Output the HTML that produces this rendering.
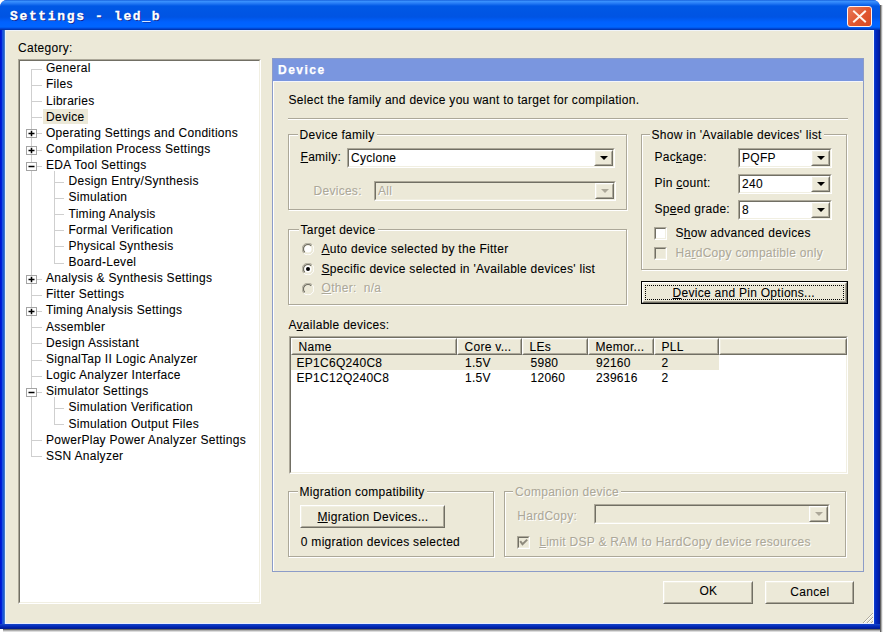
<!DOCTYPE html><html><head><meta charset="utf-8"><style>
*{margin:0;padding:0;box-sizing:border-box}
html,body{width:883px;height:632px;overflow:hidden;background:#fff;position:relative}
body{font-family:"Liberation Sans",sans-serif}
.a{position:absolute}
.t{position:absolute;font:12px/13px "Liberation Sans",sans-serif;letter-spacing:.28px;-webkit-text-stroke-width:.08px;white-space:nowrap;color:#000}
.d{color:#ACA899;text-shadow:1px 1px 0 #fff}
u{text-decoration:underline;text-underline-offset:1px}
.sunk{position:absolute;border-top:1px solid #ACA899;border-left:1px solid #ACA899;border-bottom:1px solid #fff;border-right:1px solid #fff}
.sunk>.in{position:absolute;left:0;top:0;right:0;bottom:0;border-top:1px solid #716F64;border-left:1px solid #716F64;border-bottom:1px solid #F1EFE2;border-right:1px solid #F1EFE2}
.btn{position:absolute;background:#ECE9D8;border-top:1px solid #fff;border-left:1px solid #fff;border-bottom:1px solid #716F64;border-right:1px solid #716F64}
.btn>.in{position:absolute;left:0;top:0;right:0;bottom:0;border-top:1px solid #F1EFE2;border-left:1px solid #F1EFE2;border-bottom:1px solid #ACA899;border-right:1px solid #ACA899}
.grp{position:absolute;border:1px solid #ACA899;box-shadow:inset 1px 1px 0 #fff,1px 1px 0 #fff}
.gl{background:#ECE9D8;padding:0 2px}
.hl{position:absolute;height:1px;border-top:1px solid #CFCFCF}
.vl{position:absolute;width:1px;border-left:1px solid #CFCFCF}
</style></head><body>
<div class="a" style="left:0;top:0;width:880px;height:629px;background:#0A3FD8;border-radius:7px 7px 0 0"></div>
<div class="a" style="left:0;top:0;width:880px;height:30px;border-radius:7px 7px 0 0;background:linear-gradient(#0A4FD0 0px,#3D95FF 1px,#2A7FF7 3px,#0058E5 6px,#0054E3 17px,#0061FF 22px,#0066FF 27px,#0048D8 28.5px,#0030A0 30px)"></div>
<div class="a" style="left:0;top:30px;width:5px;height:599px;background:linear-gradient(90deg,#0010D0,#0020D8 1.5px,#1850E0 2.5px,#2060C8 4px,#6090D0)"></div>
<div class="a" style="left:874px;top:30px;width:6px;height:599px;background:linear-gradient(90deg,#1040D0,#0028C0 2px,#0020B0 4px,#001890)"></div>
<div class="a" style="left:0;top:624px;width:880px;height:5px;background:linear-gradient(#1848C8,#0A34C0 1.5px,#0024B0 3px,#001A88)"></div>
<div class="a" style="left:880px;top:5px;width:3px;height:627px;background:linear-gradient(90deg,#404040,#808080 1px,#D8D8D8 2px,#fff)"></div>
<div class="a" style="left:3px;top:629px;width:877px;height:3px;background:linear-gradient(#404040,#909090 1px,#D0D0D0 2px,#E8E8E8)"></div>
<div class="a" style="left:5px;top:30px;width:869px;height:594px;background:#ECE9D8;border-top:1px solid #F0F4FA;border-left:1px solid #E8F4FF;border-right:1px solid #F4F8FF;border-bottom:1px solid #E8ECFF"></div>
<svg class="a" style="left:860px;top:610px" width="14" height="14"><path d="M13 3L3 13M13 7L7 13M13 11L11 13" stroke="#ACA899" stroke-width="1"/><path d="M13 4L4 13M13 8L8 13" stroke="#fff" stroke-width="1"/></svg>
<div class="a" style="left:10px;top:7px;font:bold 13px/20px 'Liberation Mono',monospace;color:#fff;letter-spacing:1.65px;-webkit-text-stroke:.3px #fff;text-shadow:1px 1px 0 #0A1E8A">Settings - led_b</div>
<div class="a" style="left:847px;top:6px;width:25px;height:21px;border:1px solid #FFF0F0;border-radius:3px;background:linear-gradient(135deg,#E87A5A,#E0552E 55%,#D84A22)"></div>
<svg class="a" style="left:847px;top:6px" width="25" height="21" viewBox="0 0 25 21"><path d="M7 5.5L18 15.5M18 5.5L7 15.5" stroke="#FFF4EC" stroke-width="2" stroke-linecap="square"/></svg>
<div class="t " style="left:18px;top:42.00px;">Category:</div>
<div class="sunk" style="left:18px;top:59px;width:243px;height:545px;background:#fff;"><div class="in"></div></div>
<div class="vl" style="left:31px;top:69px;height:388px"></div>
<div class="a" style="left:43px;top:109px;width:45px;height:15px;background:#ECE9D8"></div>
<div class="hl" style="left:32px;top:69px;width:10px"></div>
<div class="t " style="left:46px;top:62.20px;">General</div>
<div class="hl" style="left:32px;top:85px;width:10px"></div>
<div class="t " style="left:46px;top:78.35px;">Files</div>
<div class="hl" style="left:32px;top:101px;width:10px"></div>
<div class="t " style="left:46px;top:94.50px;">Libraries</div>
<div class="hl" style="left:32px;top:117px;width:10px"></div>
<div class="t " style="left:46px;top:110.65px;">Device</div>
<div class="hl" style="left:32px;top:133px;width:10px"></div>
<svg class="a" style="left:26px;top:129px" width="11" height="9"><rect x="0.5" y="0.5" width="10" height="8" fill="#fff" stroke="#A4A4A4"/><path d="M2.5 4.5H8.5M5.5 1.8V7.2" stroke="#000" stroke-width="1.5"/></svg>
<div class="t " style="left:46px;top:126.80px;">Operating Settings and Conditions</div>
<div class="hl" style="left:32px;top:150px;width:10px"></div>
<svg class="a" style="left:26px;top:146px" width="11" height="9"><rect x="0.5" y="0.5" width="10" height="8" fill="#fff" stroke="#A4A4A4"/><path d="M2.5 4.5H8.5M5.5 1.8V7.2" stroke="#000" stroke-width="1.5"/></svg>
<div class="t " style="left:46px;top:142.95px;">Compilation Process Settings</div>
<div class="hl" style="left:32px;top:166px;width:10px"></div>
<svg class="a" style="left:26px;top:162px" width="11" height="9"><rect x="0.5" y="0.5" width="10" height="8" fill="#fff" stroke="#A4A4A4"/><path d="M2.5 4.5H8.5" stroke="#000" stroke-width="1.5"/></svg>
<div class="t " style="left:46px;top:159.10px;">EDA Tool Settings</div>
<div class="hl" style="left:55px;top:182px;width:9px"></div>
<div class="t " style="left:68.5px;top:175.25px;">Design Entry/Synthesis</div>
<div class="hl" style="left:55px;top:198px;width:9px"></div>
<div class="t " style="left:68.5px;top:191.40px;">Simulation</div>
<div class="hl" style="left:55px;top:214px;width:9px"></div>
<div class="t " style="left:68.5px;top:207.55px;">Timing Analysis</div>
<div class="hl" style="left:55px;top:230px;width:9px"></div>
<div class="t " style="left:68.5px;top:223.70px;">Formal Verification</div>
<div class="hl" style="left:55px;top:246px;width:9px"></div>
<div class="t " style="left:68.5px;top:239.85px;">Physical Synthesis</div>
<div class="hl" style="left:55px;top:263px;width:9px"></div>
<div class="t " style="left:68.5px;top:256.00px;">Board-Level</div>
<div class="hl" style="left:32px;top:279px;width:10px"></div>
<svg class="a" style="left:26px;top:275px" width="11" height="9"><rect x="0.5" y="0.5" width="10" height="8" fill="#fff" stroke="#A4A4A4"/><path d="M2.5 4.5H8.5M5.5 1.8V7.2" stroke="#000" stroke-width="1.5"/></svg>
<div class="t " style="left:46px;top:272.15px;">Analysis &amp; Synthesis Settings</div>
<div class="hl" style="left:32px;top:295px;width:10px"></div>
<div class="t " style="left:46px;top:288.30px;">Fitter Settings</div>
<div class="hl" style="left:32px;top:311px;width:10px"></div>
<svg class="a" style="left:26px;top:307px" width="11" height="9"><rect x="0.5" y="0.5" width="10" height="8" fill="#fff" stroke="#A4A4A4"/><path d="M2.5 4.5H8.5M5.5 1.8V7.2" stroke="#000" stroke-width="1.5"/></svg>
<div class="t " style="left:46px;top:304.45px;">Timing Analysis Settings</div>
<div class="hl" style="left:32px;top:327px;width:10px"></div>
<div class="t " style="left:46px;top:320.60px;">Assembler</div>
<div class="hl" style="left:32px;top:343px;width:10px"></div>
<div class="t " style="left:46px;top:336.75px;">Design Assistant</div>
<div class="hl" style="left:32px;top:360px;width:10px"></div>
<div class="t " style="left:46px;top:352.90px;">SignalTap II Logic Analyzer</div>
<div class="hl" style="left:32px;top:376px;width:10px"></div>
<div class="t " style="left:46px;top:369.05px;">Logic Analyzer Interface</div>
<div class="hl" style="left:32px;top:392px;width:10px"></div>
<svg class="a" style="left:26px;top:388px" width="11" height="9"><rect x="0.5" y="0.5" width="10" height="8" fill="#fff" stroke="#A4A4A4"/><path d="M2.5 4.5H8.5" stroke="#000" stroke-width="1.5"/></svg>
<div class="t " style="left:46px;top:385.20px;">Simulator Settings</div>
<div class="hl" style="left:55px;top:408px;width:9px"></div>
<div class="t " style="left:68.5px;top:401.35px;">Simulation Verification</div>
<div class="hl" style="left:55px;top:424px;width:9px"></div>
<div class="t " style="left:68.5px;top:417.50px;">Simulation Output Files</div>
<div class="hl" style="left:32px;top:440px;width:10px"></div>
<div class="t " style="left:46px;top:433.65px;">PowerPlay Power Analyzer Settings</div>
<div class="hl" style="left:32px;top:456px;width:10px"></div>
<div class="t " style="left:46px;top:449.80px;">SSN Analyzer</div>
<div class="vl" style="left:54px;top:171px;height:93px"></div>
<div class="vl" style="left:54px;top:397px;height:28px"></div>
<div class="a" style="left:272px;top:58px;width:592px;height:514px;border:1px solid #8C9CC8;box-shadow:inset 1px 1px 0 #fff"></div>
<div class="a" style="left:273px;top:59px;width:590px;height:23px;background:#7A96DF;border-bottom:1px solid #F4F6FC"></div>
<div class="t " style="left:278px;top:64.20px;font-weight:bold;color:#fff;letter-spacing:1.5px;-webkit-text-stroke:.25px #fff">Device</div>
<div class="t " style="left:288.5px;top:93.50px;">Select the family and device you want to target for compilation.</div>
<div class="a" style="left:288px;top:118px;width:560px;height:2px;border-top:1px solid #ACA899;border-bottom:1px solid #fff"></div>
<div class="grp" style="left:288px;top:134px;width:339px;height:76px"></div>
<div class="t " style="left:297.5px;top:129.00px;"><span class="gl">Device family</span></div>
<div class="t " style="left:300.5px;top:150.80px;"><u>F</u>amily:</div>
<div class="sunk" style="left:347px;top:148px;width:268px;height:20px;background:#fff;"><div class="in"></div></div>
<div class="btn" style="left:594px;top:150px;width:19px;height:16px;"><div class="in"></div></div>
<svg class="a" style="left:600px;top:156px" width="8" height="4"><path d="M0 0H8L4 4Z" fill="#000"/></svg>
<div class="t " style="left:351px;top:152.00px;">Cyclone</div>
<div class="t d" style="left:313.5px;top:184.50px;">Devices:</div>
<div class="sunk" style="left:374px;top:181px;width:242px;height:20px;background:#ECE9D8;"><div class="in"></div></div>
<div class="btn" style="left:595px;top:183px;width:19px;height:16px;"><div class="in"></div></div>
<svg class="a" style="left:601px;top:189px" width="8" height="4"><path d="M0 0H8L4 4Z" fill="#ACA899"/></svg>
<div class="t d" style="left:378px;top:185.00px;">All</div>
<div class="grp" style="left:288px;top:229px;width:339px;height:76px"></div>
<div class="t " style="left:298.5px;top:223.70px;"><span class="gl">Target device</span></div>
<svg class="a" style="left:301.5px;top:243px" width="12" height="12" viewBox="0 0 12 12"><path d="M10.2 1.8A5.8 5.8 0 1 0 1.8 10.2" fill="none" stroke="#ACA899" stroke-width="1"/><path d="M9.2 2.8A4.5 4.5 0 1 0 2.8 9.2" fill="none" stroke="#716F64" stroke-width="1.3"/><path d="M1.8 10.2A5.8 5.8 0 1 0 10.2 1.8" fill="none" stroke="#fff" stroke-width="1"/><circle cx="6" cy="6" r="3.6" fill="#fff"/></svg>
<div class="t " style="left:321.5px;top:242.80px;"><u>A</u>uto device selected by the Fitter</div>
<svg class="a" style="left:301.5px;top:263px" width="12" height="12" viewBox="0 0 12 12"><path d="M10.2 1.8A5.8 5.8 0 1 0 1.8 10.2" fill="none" stroke="#ACA899" stroke-width="1"/><path d="M9.2 2.8A4.5 4.5 0 1 0 2.8 9.2" fill="none" stroke="#716F64" stroke-width="1.3"/><path d="M1.8 10.2A5.8 5.8 0 1 0 10.2 1.8" fill="none" stroke="#fff" stroke-width="1"/><circle cx="6" cy="6" r="3.6" fill="#fff"/><circle cx="6" cy="6" r="2" fill="#000"/></svg>
<div class="t " style="left:321.5px;top:262.80px;"><u>S</u>pecific device selected in 'Available devices' list</div>
<svg class="a" style="left:301.5px;top:282.5px" width="12" height="12" viewBox="0 0 12 12"><path d="M10.2 1.8A5.8 5.8 0 1 0 1.8 10.2" fill="none" stroke="#ACA899" stroke-width="1"/><path d="M9.2 2.8A4.5 4.5 0 1 0 2.8 9.2" fill="none" stroke="#716F64" stroke-width="1.3"/><path d="M1.8 10.2A5.8 5.8 0 1 0 10.2 1.8" fill="none" stroke="#fff" stroke-width="1"/><circle cx="6" cy="6" r="3.6" fill="#ECE9D8"/></svg>
<div class="t d" style="left:321.5px;top:282.30px;"><u>O</u>ther:&nbsp; n/a</div>
<div class="grp" style="left:641px;top:134px;width:206px;height:136px"></div>
<div class="t " style="left:649.5px;top:129.00px;"><span class="gl">Show in 'Available devices' list</span></div>
<div class="t " style="left:654.5px;top:151.00px;">Pac<u>k</u>age:</div>
<div class="sunk" style="left:738px;top:148px;width:94px;height:20px;background:#fff;"><div class="in"></div></div>
<div class="btn" style="left:811px;top:150px;width:19px;height:16px;"><div class="in"></div></div>
<svg class="a" style="left:817px;top:156px" width="8" height="4"><path d="M0 0H8L4 4Z" fill="#000"/></svg>
<div class="t " style="left:742px;top:152.00px;">PQFP</div>
<div class="t " style="left:654.5px;top:177.30px;">Pin <u>c</u>ount:</div>
<div class="sunk" style="left:738px;top:174px;width:94px;height:20px;background:#fff;"><div class="in"></div></div>
<div class="btn" style="left:811px;top:176px;width:19px;height:16px;"><div class="in"></div></div>
<svg class="a" style="left:817px;top:182px" width="8" height="4"><path d="M0 0H8L4 4Z" fill="#000"/></svg>
<div class="t " style="left:742px;top:178.00px;">240</div>
<div class="t " style="left:654.5px;top:203.40px;">Sp<u>e</u>ed grade:</div>
<div class="sunk" style="left:738px;top:200px;width:94px;height:20px;background:#fff;"><div class="in"></div></div>
<div class="btn" style="left:811px;top:202px;width:19px;height:16px;"><div class="in"></div></div>
<svg class="a" style="left:817px;top:208px" width="8" height="4"><path d="M0 0H8L4 4Z" fill="#000"/></svg>
<div class="t " style="left:742px;top:204.00px;">8</div>
<div class="sunk" style="left:654px;top:227px;width:13px;height:13px;background:#fff;"><div class="in"></div></div>
<div class="t " style="left:675.5px;top:226.60px;">S<u>h</u>ow advanced devices</div>
<div class="sunk" style="left:654px;top:247px;width:13px;height:13px;background:#ECE9D8;"><div class="in"></div></div>
<div class="t d" style="left:675.5px;top:246.60px;">Ha<u>r</u>dCopy compatible only</div>
<div class="a" style="left:641px;top:281px;width:207px;height:23px;border:1px solid #000"></div>
<div class="btn" style="left:642px;top:282px;width:205px;height:21px;"><div class="in"></div></div>
<div class="a" style="left:645px;top:285px;width:199px;height:15px;border:1px dotted #000"></div>
<div class="t " style="left:672.5px;top:286.50px;"><u>D</u>evice and Pin Options...</div>
<div class="t " style="left:288.5px;top:318.50px;">A<u>v</u>ailable devices:</div>
<div class="sunk" style="left:289px;top:336px;width:559px;height:138px;background:#fff;"><div class="in"></div></div>
<div class="btn" style="left:291px;top:338px;width:166px;height:17px;"><div class="in"></div></div>
<div class="t " style="left:298.5px;top:340.60px;">Name</div>
<div class="btn" style="left:457px;top:338px;width:65px;height:17px;"><div class="in"></div></div>
<div class="t " style="left:464.5px;top:340.60px;">Core v...</div>
<div class="btn" style="left:522px;top:338px;width:66px;height:17px;"><div class="in"></div></div>
<div class="t " style="left:529.5px;top:340.60px;">LEs</div>
<div class="btn" style="left:588px;top:338px;width:66px;height:17px;"><div class="in"></div></div>
<div class="t " style="left:595.5px;top:340.60px;">Memor...</div>
<div class="btn" style="left:654px;top:338px;width:65px;height:17px;"><div class="in"></div></div>
<div class="t " style="left:661.5px;top:340.60px;">PLL</div>
<div class="btn" style="left:719px;top:338px;width:128px;height:17px;"><div class="in"></div></div>
<div class="a" style="left:291px;top:355px;width:428px;height:15px;background:#ECE9D8"></div>
<div class="t " style="left:296.5px;top:357.40px;">EP1C6Q240C8</div>
<div class="t " style="left:465px;top:357.40px;">1.5V</div>
<div class="t " style="left:530.5px;top:357.40px;">5980</div>
<div class="t " style="left:596px;top:357.40px;">92160</div>
<div class="t " style="left:661.5px;top:357.40px;">2</div>
<div class="t " style="left:296.5px;top:371.60px;">EP1C12Q240C8</div>
<div class="t " style="left:465px;top:371.60px;">1.5V</div>
<div class="t " style="left:530.5px;top:371.60px;">12060</div>
<div class="t " style="left:596px;top:371.60px;">239616</div>
<div class="t " style="left:661.5px;top:371.60px;">2</div>
<div class="grp" style="left:288px;top:491px;width:206px;height:66px"></div>
<div class="t " style="left:297.5px;top:485.60px;"><span class="gl">Migration compatibility</span></div>
<div class="btn" style="left:300px;top:505px;width:145px;height:23px;"><div class="in"></div></div>
<div class="t " style="left:317.5px;top:511.10px;"><u>M</u>igration Devices...</div>
<div class="t " style="left:300.8px;top:536.00px;">0 migration devices selected</div>
<div class="grp" style="left:504px;top:491px;width:342px;height:66px"></div>
<div class="t d" style="left:513px;top:485.60px;"><span class="gl d">Companion device</span></div>
<div class="t d" style="left:517.3px;top:510.00px;">HardCopy:</div>
<div class="sunk" style="left:594px;top:504px;width:236px;height:20px;background:#ECE9D8;"><div class="in"></div></div>
<div class="btn" style="left:809px;top:506px;width:19px;height:16px;"><div class="in"></div></div>
<svg class="a" style="left:815px;top:512px" width="8" height="4"><path d="M0 0H8L4 4Z" fill="#ACA899"/></svg>
<div class="sunk" style="left:517px;top:536px;width:13px;height:13px;background:#ECE9D8;"><div class="in"></div></div>
<svg class="a" style="left:517px;top:536px" width="13" height="13"><path d="M3.2 5.2L5.5 8.2L10.2 3.6" fill="none" stroke="#8F8B7E" stroke-width="2"/></svg>
<div class="t d" style="left:539.2px;top:535.50px;"><u>L</u>imit DSP &amp; RAM to HardCopy device resources</div>
<div class="btn" style="left:663px;top:581px;width:90px;height:23px;"><div class="in"></div></div>
<div class="t " style="left:699.5px;top:585.20px;">OK</div>
<div class="btn" style="left:765px;top:581px;width:89px;height:23px;"><div class="in"></div></div>
<div class="t " style="left:790.3px;top:585.50px;">Cancel</div>
</body></html>
